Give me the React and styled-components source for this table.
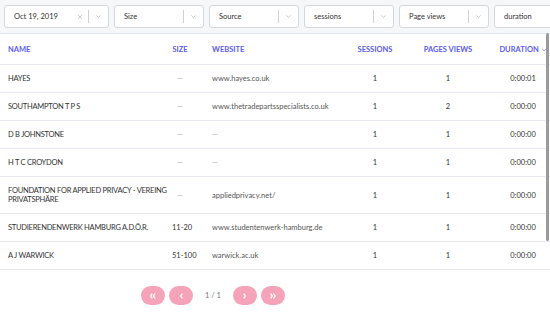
import styled, { createGlobalStyle } from 'styled-components'

const GlobalStyle = createGlobalStyle`
  html, body {
    margin: 0;
    padding: 0;
    background: #ffffff;
    overflow: hidden;
  }
  body {
    font-family: 'Lato', 'Open Sans', sans-serif;
    color: #333;
  }
`

const filters = [
  { label: 'Oct 19, 2019', width: 105, clear: true },
  { label: 'Size', width: 90 },
  { label: 'Source', width: 90 },
  { label: 'sessions', width: 90 },
  { label: 'Page views', width: 90 },
  { label: 'duration', width: 90 },
]

const rows = [
  { name: 'HAYES', size: '—', website: 'www.hayes.co.uk', sessions: 1, views: 1, duration: '0:00:01' },
  { name: 'SOUTHAMPTON T P S', size: '—', website: 'www.thetradepartsspecialists.co.uk', sessions: 1, views: 2, duration: '0:00:00' },
  { name: 'D B JOHNSTONE', size: '—', website: '—', sessions: 1, views: 1, duration: '0:00:00' },
  { name: 'H T C CROYDON', size: '—', website: '—', sessions: 1, views: 1, duration: '0:00:00' },
  { name: 'FOUNDATION FOR APPLIED PRIVACY - VEREING\nPRIVATSPHÄRE', size: '—', website: 'appliedprivacy.net/', sessions: 1, views: 1, duration: '0:00:00' },
  { name: 'STUDIERENDENWERK HAMBURG A.D.Ö.R.', size: '11-20', website: 'www.studentenwerk-hamburg.de', sessions: 1, views: 1, duration: '0:00:00' },
  { name: 'A J WARWICK', size: '51-100', website: 'warwick.ac.uk', sessions: 1, views: 1, duration: '0:00:00' },
]

const Chevron = ({ size = 7, color = '#b5b9c0' }) => (
  <svg width={size} height={size} viewBox="0 0 10 10" fill="none">
    <path d="M2 3.5 L5 6.5 L8 3.5" stroke={color} strokeWidth="1.1" />
  </svg>
)

const Cross = () => (
  <svg width="6" height="6" viewBox="0 0 10 10" fill="none">
    <path d="M2 2 L8 8 M8 2 L2 8" stroke="#b5b9c0" strokeWidth="1.3" />
  </svg>
)

// pager arrows: dir -1 points left, 1 points right
const PagerArrow = ({ dir, double }) => {
  const tip = (x) => (dir < 0 ? `M${x + 2} 2 L${x} 5 L${x + 2} 8` : `M${x} 2 L${x + 2} 5 L${x} 8`)
  return (
    <svg width={double ? 8 : 5} height="8" viewBox={double ? '0 0 8 10' : '0 0 5 10'} fill="none">
      <path d={double ? `${tip(1)} ${tip(4.5)}` : tip(1.5)} stroke="#fff" strokeWidth="1.6" />
    </svg>
  )
}

const FilterSelect = ({ label, width, clear }) => (
  <SC.Select $width={width}>
    <SC.Value>{label}</SC.Value>
    {clear && (
      <SC.Clear>
        <Cross />
      </SC.Clear>
    )}
    <SC.Separator />
    <SC.Indicator>
      <Chevron />
    </SC.Indicator>
  </SC.Select>
)

const App = () => {
  return (
    <>
      <GlobalStyle />
      <SC.Page>
        <SC.FilterBar>
          {filters.map((f) => (
            <FilterSelect key={f.label} {...f} />
          ))}
        </SC.FilterBar>
        <SC.Table>
          <SC.HeadRow>
            <SC.Cell>Name</SC.Cell>
            <SC.Cell $center>Size</SC.Cell>
            <SC.Cell $pad>Website</SC.Cell>
            <SC.Cell $center>Sessions</SC.Cell>
            <SC.Cell $center>Pages views</SC.Cell>
            <SC.Cell $center>
              Duration <Chevron size={6} color="#5b5bf2" />
            </SC.Cell>
          </SC.HeadRow>
          {rows.map((r) => (
            <SC.Row key={r.name}>
              <SC.Name>{r.name}</SC.Name>
              <SC.Cell $center $muted={r.size === '—'}>{r.size}</SC.Cell>
              <SC.Cell $pad $link $muted={r.website === '—'}>{r.website}</SC.Cell>
              <SC.Cell $center>{r.sessions}</SC.Cell>
              <SC.Cell $center>{r.views}</SC.Cell>
              <SC.Cell $center>{r.duration}</SC.Cell>
            </SC.Row>
          ))}
        </SC.Table>
        <SC.Pager>
          <SC.PageButton>
            <PagerArrow dir={-1} double />
          </SC.PageButton>
          <SC.PageButton>
            <PagerArrow dir={-1} />
          </SC.PageButton>
          <SC.PageInfo>1 / 1</SC.PageInfo>
          <SC.PageButton>
            <PagerArrow dir={1} />
          </SC.PageButton>
          <SC.PageButton>
            <PagerArrow dir={1} double />
          </SC.PageButton>
        </SC.Pager>
        <SC.ScrollThumb />
      </SC.Page>
    </>
  )
}

const SC = {}
SC.Page = styled.div`
  position: relative;
  width: 550px;
  height: 329px;
  overflow: hidden;
`
SC.FilterBar = styled.div`
  display: flex;
  gap: 5px;
  padding: 5px 4px;
  height: 23px;
  background: #f6f7f9;
  border-bottom: 1px solid #e3e7ef;
  white-space: nowrap;
`
SC.Select = styled.div`
  flex: 0 0 ${(p) => p.$width}px;
  box-sizing: border-box;
  height: 23px;
  display: flex;
  align-items: center;
  background: #fff;
  border: 1px solid #d5d8dd;
  border-radius: 3px;
  font-size: 7.5px;
  color: #333;
`
SC.Value = styled.div`
  flex: 1;
  padding-left: 9px;
`
SC.Clear = styled.div`
  display: flex;
  padding: 0 5px;
`
SC.Separator = styled.div`
  width: 1px;
  height: 13px;
  background: #cfd2d7;
`
SC.Indicator = styled.div`
  display: flex;
  padding: 0 6px;
`
SC.Table = styled.div`
  width: 558px;
`
SC.Row = styled.div`
  display: grid;
  grid-template-columns: 164px 16px 154px 66px 80px 70px;
  align-items: center;
  padding: 9px 0 9px 8px;
  border-bottom: 1px solid #e6e9f2;
  font-size: 7.5px;
  line-height: 9px;
  color: #333;
`
SC.HeadRow = styled(SC.Row)`
  padding: 11px 0 10px 8px;
  color: #5b5bf2;
  text-transform: uppercase;
  font-weight: 700;
`
SC.Cell = styled.div`
  text-align: ${(p) => (p.$center ? 'center' : 'left')};
  padding-left: ${(p) => (p.$pad ? '24px' : '0')};
  color: ${(p) => (p.$muted ? '#a9adb4' : p.$link ? '#555' : 'inherit')};
  white-space: nowrap;
  svg {
    vertical-align: middle;
  }
`
SC.Name = styled.div`
  white-space: pre;
  letter-spacing: -0.25px;
`
SC.Pager = styled.div`
  display: flex;
  align-items: center;
  gap: 4px;
  margin: 16px 0 0 141px;
`
SC.PageButton = styled.div`
  width: 24px;
  height: 19px;
  border-radius: 10px;
  background: #f5a3b8;
  display: flex;
  align-items: center;
  justify-content: center;
`
SC.PageInfo = styled.div`
  font-size: 7.5px;
  color: #777;
  margin: 0 8px;
`
SC.ScrollThumb = styled.div`
  position: absolute;
  top: 33px;
  right: 1px;
  width: 3px;
  height: 208px;
  border-radius: 2px;
  background: #9b9b9b;
`

export default App
